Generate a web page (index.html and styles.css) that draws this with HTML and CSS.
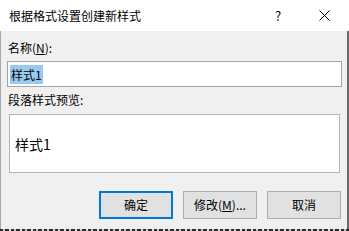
FILE: index.html
```html
<!DOCTYPE html>
<html lang="zh-CN">
<head>
    <meta charset="UTF-8">
    <title>根据格式设置创建新样式</title>
    <link rel="stylesheet" href="styles.css">
</head>
<body>
    <div class="dialog">
        <div class="titlebar">
            <span class="title">根据格式设置创建新样式</span>
            <span class="help">?</span>
            <span class="close">
                <svg width="11" height="11" viewBox="0 0 11 11">
                    <path d="M0.5 0.5 L10.5 10.5 M10.5 0.5 L0.5 10.5" stroke="#000" stroke-width="1" fill="none"/>
                </svg>
            </span>
        </div>

        <div class="content">
            <div class="label label-name">名称(<u>N</u>):</div>
            <div class="textbox"><span class="selected">样式1</span></div>

            <div class="label label-preview">段落样式预览:</div>
            <div class="preview">样式1</div>

            <div class="buttons">
                <div class="btn btn-default">确定</div>
                <div class="btn">修改(<u>M</u>)...</div>
                <div class="btn">取消</div>
            </div>
        </div>
        <div class="edge"></div>
    </div>
</body>
</html>
```

FILE: styles.css
```css
body {
    margin: 0;
    font-family: "Noto Sans CJK SC", "Noto Sans", sans-serif;
    font-size: 12px;
    color: #000;
    background: #f0f0f0;
}

.dialog {
    width: 349px;
    height: 231px;
    display: flex;
    flex-direction: column;
    overflow: hidden;
}

.titlebar {
    height: 31px;
    background: #fff;
    display: flex;
    align-items: center;
    flex-shrink: 0;
}

.title {
    margin-left: 9px;
    flex: 1;
    line-height: 16px;
}

.help {
    width: 10px;
    margin-right: 36px;
    text-align: center;
    font-size: 13px;
}

.close {
    width: 11px;
    height: 11px;
    margin-right: 19px;
    display: flex;
}

.content {
    flex: 1;
    background: #f0f0f0;
    border-left: 1px solid #a8a8a8;
    border-right: 2px solid #6a6a6a;
    padding: 9px 5px 0 6px;
    display: flex;
    flex-direction: column;
}

.label {
    line-height: 16px;
    height: 16px;
    padding-left: 1px;
}

.label-name {
    margin-bottom: 5px;
}

.textbox {
    height: 24px;
    border: 1px solid #a3a3a3;
    background: #fff;
    display: flex;
    align-items: center;
    padding-left: 2px;
}

.selected {
    background: #99c9ef;
    line-height: 19px;
    padding: 0 1px;
}

.label-preview {
    margin-top: 5px;
    margin-bottom: 6px;
}

.preview {
    height: 57px;
    margin: 0 2px 0 2px;
    border: 1px solid #b4b4b4;
    background: #fff;
    display: flex;
    align-items: center;
    padding-left: 5px;
    font-size: 14px;
}

.buttons {
    margin-top: 18px;
    display: flex;
    justify-content: flex-end;
    gap: 10px;
    padding-right: 1px;
}

.btn {
    width: 72px;
    height: 26px;
    border: 1px solid #adadad;
    background: #e1e1e1;
    display: flex;
    align-items: center;
    justify-content: center;
    line-height: 16px;
}

.btn-default {
    width: 70px;
    height: 24px;
    border: 2px solid #0078d7;
}

.edge {
    height: 2px;
    flex-shrink: 0;
    background: repeating-linear-gradient(90deg, #2a2a2a 0 3px, #c8c8c8 3px 5px, #2a2a2a 5px 9px, #e0e0e0 9px 11px);
}
```
